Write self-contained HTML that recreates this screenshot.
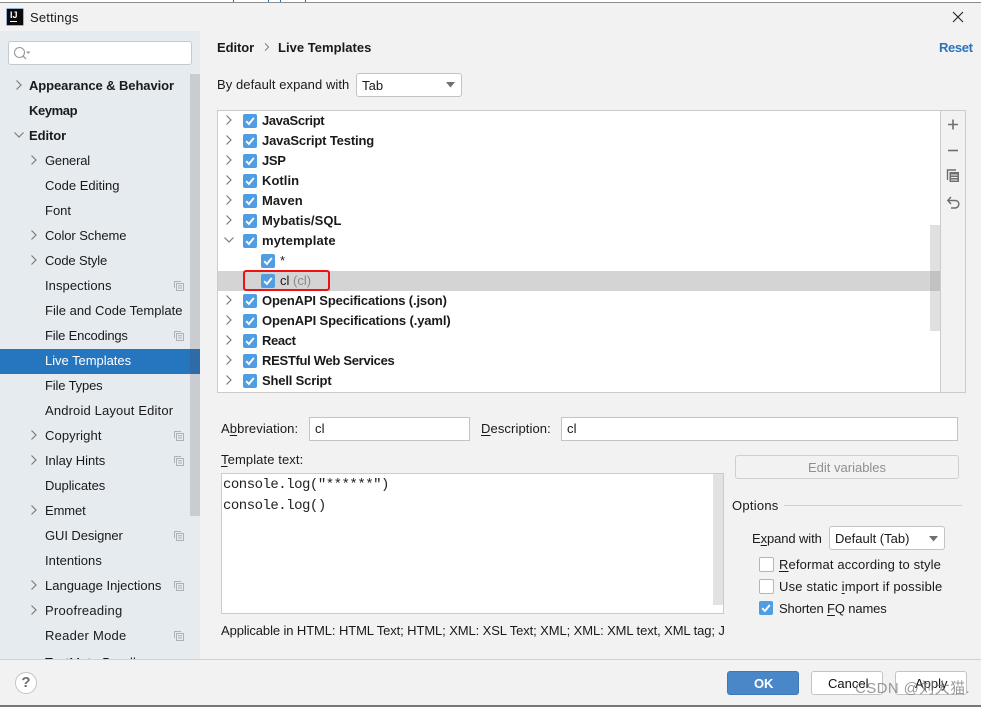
<!DOCTYPE html>
<html><head><meta charset="utf-8"><style>
html,body{margin:0;padding:0;width:981px;height:707px;overflow:hidden;background:#f2f2f2}
body{position:relative;font-family:"Liberation Sans","Noto Sans CJK SC",sans-serif;font-size:13px;color:#1a1a1a}
.a{position:absolute}
.t{position:absolute;white-space:nowrap;line-height:18px;height:18px;letter-spacing:.1px}
.b{font-weight:bold;margin-top:1px;letter-spacing:-.12px}
.sb .t{margin-top:1px;letter-spacing:0}
.w{color:#fff}
u{text-underline-offset:2px}
.cb{position:absolute;width:14px;height:14px;background:#4f9ee3;border-radius:2px}
.cb svg{position:absolute;left:0;top:0}
.ub{position:absolute;width:13px;height:13px;background:#fff;border:1px solid #b6b6b6;border-radius:2px}
svg{display:block}
.arr{position:absolute}
.in{position:absolute;background:#fff;border:1px solid #c4c4c4;box-sizing:border-box}
.btn{position:absolute;background:#fff;border:1px solid #c4c4c4;border-radius:3px;box-sizing:border-box}
</style></head><body>
<svg width="0" height="0" style="position:absolute"><defs>
<symbol id="r" viewBox="0 0 10 10"><path d="M2.5 .5L7 5L2.5 9.5" fill="none" stroke="#7c7c7c" stroke-width="1.2"/></symbol>
<symbol id="d" viewBox="0 0 10 10"><path d="M.5 2.5L5 7L9.5 2.5" fill="none" stroke="#7c7c7c" stroke-width="1.2"/></symbol>
<symbol id="c" viewBox="0 0 14 14"><path d="M3.2 7.2L5.9 10L10.8 4" fill="none" stroke="#fff" stroke-width="1.9"/></symbol>
<symbol id="p" viewBox="0 0 10 10"><path d="M.5 7V.5H7M2.5 2.5H9.5V9.500H2.5ZM4 4.7H8M4 7H8" fill="none" stroke="#adb2b7" stroke-width="1"/></symbol>
</defs></svg>

<!-- top strip -->
<div class="a" style="left:0;top:0;width:981px;height:2px;background:#fff"></div>
<div class="a" style="left:0;top:2px;width:981px;height:1px;background:#8c8c8c"></div>
<div class="a" style="left:233px;top:0;width:1px;height:2px;background:#2675bf"></div>
<div class="a" style="left:268px;top:0;width:1px;height:2px;background:#2675bf"></div>
<div class="a" style="left:280px;top:0;width:1px;height:2px;background:#2675bf"></div>
<div class="a" style="left:305px;top:0;width:1px;height:2px;background:#2675bf"></div>

<!-- title -->
<div class="a" style="left:7px;top:9px;width:16px;height:16px;background:#0b0b0d;box-shadow:0 0 0 .5px #2d6fb5">
<div class="a" style="left:3px;top:1px;font:bold 9px/10px 'Liberation Sans',sans-serif;color:#fff">IJ</div>
<div class="a" style="left:3px;top:12px;width:7px;height:1px;background:#fff"></div></div>
<div class="t" style="left:30px;top:9px;font-size:13px;letter-spacing:.2px">Settings</div>
<svg class="a" style="left:952px;top:11px" width="12" height="12"><path d="M1 1L11 11M11 1L1 11" stroke="#222" stroke-width="1.1" fill="none"/></svg>

<!-- sidebar -->
<div class="a" style="left:0;top:31px;width:200px;height:628px;background:#e6ebf0;overflow:hidden">
<div class="a" style="left:190px;top:43px;width:10px;height:442px;background:#c9cdd2"></div>
<div class="a" style="left:0;top:318px;width:200px;height:25px;background:#2675bf"></div>
<div class="a" style="left:190px;top:318px;width:10px;height:25px;background:#2f6ba6"></div>
<div class="t" style="left:45px;top:623px">TextMate Bundles</div>
</div>
<div class="in" style="left:8px;top:41px;width:184px;height:24px;border-radius:3px;border-color:#c6c9cc"></div>
<svg class="a" style="left:13px;top:46px" width="18" height="14"><circle cx="6.5" cy="6.500" r="5" fill="none" stroke="#999" stroke-width="1.1"/><path d="M10 10L13 13" stroke="#999" stroke-width="1.3"/><path d="M13 5.500H17.500L15.200 8Z" fill="#999"/></svg>

<div class="sb">
<svg class="arr" style="left:14px;top:80px" width="10" height="10"><use href="#r"/></svg>
<div class="t b" style="left:29px;top:76px;letter-spacing:-.08px">Appearance &amp; Behavior</div>
<div class="t b" style="left:29px;top:101px;letter-spacing:-.4px">Keymap</div>
<svg class="arr" style="left:14px;top:130px" width="10" height="10"><use href="#d"/></svg>
<div class="t b" style="left:29px;top:126px;letter-spacing:-.08px">Editor</div>

<svg class="arr" style="left:29px;top:155px" width="10" height="10"><use href="#r"/></svg>
<div class="t" style="left:45px;top:151px;letter-spacing:-.18px">General</div>
<div class="t" style="left:45px;top:176px">Code Editing</div>
<div class="t" style="left:45px;top:201px">Font</div>
<svg class="arr" style="left:29px;top:230px" width="10" height="10"><use href="#r"/></svg>
<div class="t" style="left:45px;top:226px;letter-spacing:-.08px">Color Scheme</div>
<svg class="arr" style="left:29px;top:255px" width="10" height="10"><use href="#r"/></svg>
<div class="t" style="left:45px;top:251px;letter-spacing:-.15px">Code Style</div>
<div class="t" style="left:45px;top:276px;letter-spacing:.07px">Inspections</div>
<svg class="arr" style="left:174px;top:281px" width="10" height="10"><use href="#p"/></svg>
<div class="t" style="left:45px;top:301px;letter-spacing:.02px">File and Code Template</div>
<div class="t" style="left:45px;top:326px;letter-spacing:-.18px">File Encodings</div>
<svg class="arr" style="left:174px;top:331px" width="10" height="10"><use href="#p"/></svg>
<div class="t w" style="left:45px;top:351px;letter-spacing:-.03px">Live Templates</div>
<div class="t" style="left:45px;top:376px;letter-spacing:-.15px">File Types</div>
<div class="t" style="left:45px;top:401px;letter-spacing:.15px">Android Layout Editor</div>
<svg class="arr" style="left:29px;top:430px" width="10" height="10"><use href="#r"/></svg>
<div class="t" style="left:45px;top:426px;letter-spacing:.1px">Copyright</div>
<svg class="arr" style="left:174px;top:431px" width="10" height="10"><use href="#p"/></svg>
<svg class="arr" style="left:29px;top:455px" width="10" height="10"><use href="#r"/></svg>
<div class="t" style="left:45px;top:451px;letter-spacing:-.05px">Inlay Hints</div>
<svg class="arr" style="left:174px;top:456px" width="10" height="10"><use href="#p"/></svg>
<div class="t" style="left:45px;top:476px;letter-spacing:-.05px">Duplicates</div>
<svg class="arr" style="left:29px;top:505px" width="10" height="10"><use href="#r"/></svg>
<div class="t" style="left:45px;top:501px;letter-spacing:-.1px">Emmet</div>
<div class="t" style="left:45px;top:526px;letter-spacing:-.08px">GUI Designer</div>
<svg class="arr" style="left:174px;top:531px" width="10" height="10"><use href="#p"/></svg>
<div class="t" style="left:45px;top:551px;letter-spacing:.05px">Intentions</div>
<svg class="arr" style="left:29px;top:580px" width="10" height="10"><use href="#r"/></svg>
<div class="t" style="left:45px;top:576px">Language Injections</div>
<svg class="arr" style="left:174px;top:581px" width="10" height="10"><use href="#p"/></svg>
<svg class="arr" style="left:29px;top:605px" width="10" height="10"><use href="#r"/></svg>
<div class="t" style="left:45px;top:601px;letter-spacing:.25px">Proofreading</div>
<div class="t" style="left:45px;top:626px;letter-spacing:.25px">Reader Mode</div>
<svg class="arr" style="left:174px;top:631px" width="10" height="10"><use href="#p"/></svg>
</div>

<!-- header -->
<div class="t b" style="left:217px;top:38px;letter-spacing:-.08px">Editor</div>
<svg class="arr" style="left:263px;top:43px" width="8" height="8"><use href="#r"/></svg>
<div class="t b" style="left:278px;top:38px;letter-spacing:.03px">Live Templates</div>
<div class="t b" style="left:939px;top:38px;color:#2d72bd;letter-spacing:-.35px">Reset</div>
<div class="t" style="left:217px;top:76px;letter-spacing:.07px">By default expand with</div>
<div class="in" style="left:356px;top:73px;width:106px;height:24px;border-radius:3px"></div>
<div class="t" style="left:362px;top:77px">Tab</div>
<svg class="a" style="left:446px;top:82px" width="10" height="6"><path d="M0 0H9L4.5 5.5Z" fill="#6f6f6f"/></svg>

<!-- tree -->
<div class="a" style="left:217px;top:110px;width:749px;height:283px;box-sizing:border-box;border:1px solid #cbcbcb;background:#fff"></div>
<div class="a" style="left:940px;top:111px;width:25px;height:281px;box-sizing:border-box;background:#f2f2f2;border-left:1px solid #cbcbcb"></div>
<div class="a" style="left:218px;top:271px;width:722px;height:20px;background:#d4d4d4"></div>
<div class="a" style="left:930px;top:225px;width:10px;height:106px;background:#e0e0e0"></div>
<div class="a" style="left:930px;top:271px;width:10px;height:20px;background:#c2c2c2"></div>

<svg class="arr" style="left:224px;top:115px" width="10" height="10"><use href="#r"/></svg>
<div class="cb" style="left:243px;top:114px"><svg width="14" height="14"><use href="#c"/></svg></div>
<div class="t b" style="left:262px;top:111px;letter-spacing:-.35px">JavaScript</div>
<svg class="arr" style="left:224px;top:135px" width="10" height="10"><use href="#r"/></svg>
<div class="cb" style="left:243px;top:134px"><svg width="14" height="14"><use href="#c"/></svg></div>
<div class="t b" style="left:262px;top:131px;letter-spacing:-.14px">JavaScript Testing</div>
<svg class="arr" style="left:224px;top:155px" width="10" height="10"><use href="#r"/></svg>
<div class="cb" style="left:243px;top:154px"><svg width="14" height="14"><use href="#c"/></svg></div>
<div class="t b" style="left:262px;top:151px;letter-spacing:-.3px">JSP</div>
<svg class="arr" style="left:224px;top:175px" width="10" height="10"><use href="#r"/></svg>
<div class="cb" style="left:243px;top:174px"><svg width="14" height="14"><use href="#c"/></svg></div>
<div class="t b" style="left:262px;top:171px;letter-spacing:.05px">Kotlin</div>
<svg class="arr" style="left:224px;top:195px" width="10" height="10"><use href="#r"/></svg>
<div class="cb" style="left:243px;top:194px"><svg width="14" height="14"><use href="#c"/></svg></div>
<div class="t b" style="left:262px;top:191px;letter-spacing:.05px">Maven</div>
<svg class="arr" style="left:224px;top:215px" width="10" height="10"><use href="#r"/></svg>
<div class="cb" style="left:243px;top:214px"><svg width="14" height="14"><use href="#c"/></svg></div>
<div class="t b" style="left:262px;top:211px;letter-spacing:.07px">Mybatis/SQL</div>
<svg class="arr" style="left:224px;top:235px" width="10" height="10"><use href="#d"/></svg>
<div class="cb" style="left:243px;top:234px"><svg width="14" height="14"><use href="#c"/></svg></div>
<div class="t b" style="left:262px;top:231px;letter-spacing:.15px">mytemplate</div>
<div class="cb" style="left:261px;top:254px"><svg width="14" height="14"><use href="#c"/></svg></div>
<div class="t" style="left:280px;top:252px">*</div>
<div class="cb" style="left:261px;top:274px"><svg width="14" height="14"><use href="#c"/></svg></div>
<div class="t" style="left:280px;top:272px;letter-spacing:0">cl <span style="color:#8a8a8a">(cl)</span></div>
<div class="a" style="left:243px;top:270px;width:87px;height:21px;box-sizing:border-box;border:2px solid #f01010;border-radius:3px"></div>
<svg class="arr" style="left:224px;top:295px" width="10" height="10"><use href="#r"/></svg>
<div class="cb" style="left:243px;top:294px"><svg width="14" height="14"><use href="#c"/></svg></div>
<div class="t b" style="left:262px;top:291px;letter-spacing:-.15px">OpenAPI Specifications (.json)</div>
<svg class="arr" style="left:224px;top:315px" width="10" height="10"><use href="#r"/></svg>
<div class="cb" style="left:243px;top:314px"><svg width="14" height="14"><use href="#c"/></svg></div>
<div class="t b" style="left:262px;top:311px;letter-spacing:-.12px">OpenAPI Specifications (.yaml)</div>
<svg class="arr" style="left:224px;top:335px" width="10" height="10"><use href="#r"/></svg>
<div class="cb" style="left:243px;top:334px"><svg width="14" height="14"><use href="#c"/></svg></div>
<div class="t b" style="left:262px;top:331px;letter-spacing:-.35px">React</div>
<svg class="arr" style="left:224px;top:355px" width="10" height="10"><use href="#r"/></svg>
<div class="cb" style="left:243px;top:354px"><svg width="14" height="14"><use href="#c"/></svg></div>
<div class="t b" style="left:262px;top:351px;letter-spacing:-.3px">RESTful Web Services</div>
<svg class="arr" style="left:224px;top:375px" width="10" height="10"><use href="#r"/></svg>
<div class="cb" style="left:243px;top:374px"><svg width="14" height="14"><use href="#c"/></svg></div>
<div class="t b" style="left:262px;top:371px;letter-spacing:-.17px">Shell Script</div>

<!-- toolbar icons -->
<svg class="a" style="left:946px;top:116px" width="14" height="96">
<path d="M2 8.5H12M7 3.5V13.500" stroke="#6e6e6e" stroke-width="1.6" fill="none"/>
<path d="M2 34.5H12" stroke="#6e6e6e" stroke-width="1.6" fill="none"/>
<path d="M1.5 64V54H10" stroke="#6e6e6e" stroke-width="1.4" fill="none"/>
<path d="M3.500 56H13V66H3.500Z" fill="#6e6e6e"/><path d="M5 59H11.500M5 61.500H11.500M5 64H11.500" stroke="#f2f2f2" stroke-width=".9"/>
<path d="M5 81L1.800 84.500L5 88" fill="none" stroke="#6e6e6e" stroke-width="1.400"/><path d="M2 84.500H9C11.500 84.500 12.800 86 12.800 88C12.800 90.500 11 92 9 92H5" fill="none" stroke="#6e6e6e" stroke-width="1.500"/>
</svg>

<!-- form -->
<div class="t" style="left:221px;top:420px">A<u>b</u>breviation:</div>
<div class="in" style="left:309px;top:417px;width:161px;height:24px"></div>
<div class="t" style="left:315px;top:420px">cl</div>
<div class="t" style="left:481px;top:420px"><u>D</u>escription:</div>
<div class="in" style="left:561px;top:417px;width:397px;height:24px"></div>
<div class="t" style="left:567px;top:420px">cl</div>
<div class="t" style="left:221px;top:451px"><u>T</u>emplate text:</div>
<div class="in" style="left:221px;top:473px;width:503px;height:141px;border-color:#cbcbcb"></div>
<div class="a" style="left:713px;top:474px;width:10px;height:131px;background:#e2e2e2"></div>
<div class="a" style="left:223px;top:475px;font:14px/21px 'Liberation Mono',monospace;color:#222;white-space:pre;letter-spacing:-.5px">console.log("******")
console.log()</div>
<div class="t" style="left:221px;top:622px;width:506px;overflow:hidden;letter-spacing:-.1px">Applicable in HTML: HTML Text; HTML; XML: XSL Text; XML; XML: XML text, XML tag; J</div>

<div class="btn" style="left:735px;top:455px;width:224px;height:24px;background:#f2f2f2;border-color:#cfcfcf"></div>
<div class="t" style="left:808px;top:459px;color:#8f8f8f;letter-spacing:0">Edit variables</div>
<div class="t" style="left:732px;top:497px;letter-spacing:.25px">Options</div>
<div class="a" style="left:784px;top:505px;width:178px;height:1px;background:#d1d1d1"></div>
<div class="t" style="left:752px;top:530px;letter-spacing:-.1px">E<u>x</u>pand with</div>
<div class="in" style="left:829px;top:526px;width:116px;height:24px;border-radius:3px"></div>
<div class="t" style="left:835px;top:530px;letter-spacing:0">Default (Tab)</div>
<svg class="a" style="left:929px;top:536px" width="10" height="6"><path d="M0 0H9L4.500 5.500Z" fill="#6f6f6f"/></svg>
<div class="ub" style="left:759px;top:557px"></div>
<div class="t" style="left:779px;top:556px;letter-spacing:.14px"><u>R</u>eformat according to style</div>
<div class="ub" style="left:759px;top:579px"></div>
<div class="t" style="left:779px;top:578px;letter-spacing:.18px">Use static <u>i</u>mport if possible</div>
<div class="cb" style="left:759px;top:601px"><svg width="14" height="14"><use href="#c"/></svg></div>
<div class="t" style="left:779px;top:600px;letter-spacing:-.14px">Shorten <u>F</u>Q names</div>

<!-- footer -->
<div class="a" style="left:0;top:659px;width:981px;height:1px;background:#d1d1d1"></div>
<div class="a" style="left:15px;top:672px;width:22px;height:22px;box-sizing:border-box;border:1px solid #c4c4c4;border-radius:50%;background:#fff;text-align:center;font:bold 15px/20px 'Liberation Sans',sans-serif;color:#6e6e6e">?</div>
<div class="btn" style="left:727px;top:671px;width:72px;height:24px;background:#4a87c9;border-color:#3f78b8"></div>
<div class="t b w" style="left:754px;top:674px">OK</div>
<div class="btn" style="left:811px;top:671px;width:72px;height:24px"></div>
<div class="t" style="left:828px;top:675px;color:#111;letter-spacing:0">Cancel</div>
<div class="btn" style="left:895px;top:671px;width:72px;height:24px"></div>
<div class="t" style="left:915px;top:675px;color:#111;letter-spacing:0">Apply</div>
<div class="t" style="left:855px;top:680px;font-size:15px;color:rgba(120,120,120,.75);letter-spacing:.4px">CSDN @刘大猫.</div>
<div class="a" style="left:0;top:705px;width:981px;height:2px;background:#777"></div>
</body></html>
